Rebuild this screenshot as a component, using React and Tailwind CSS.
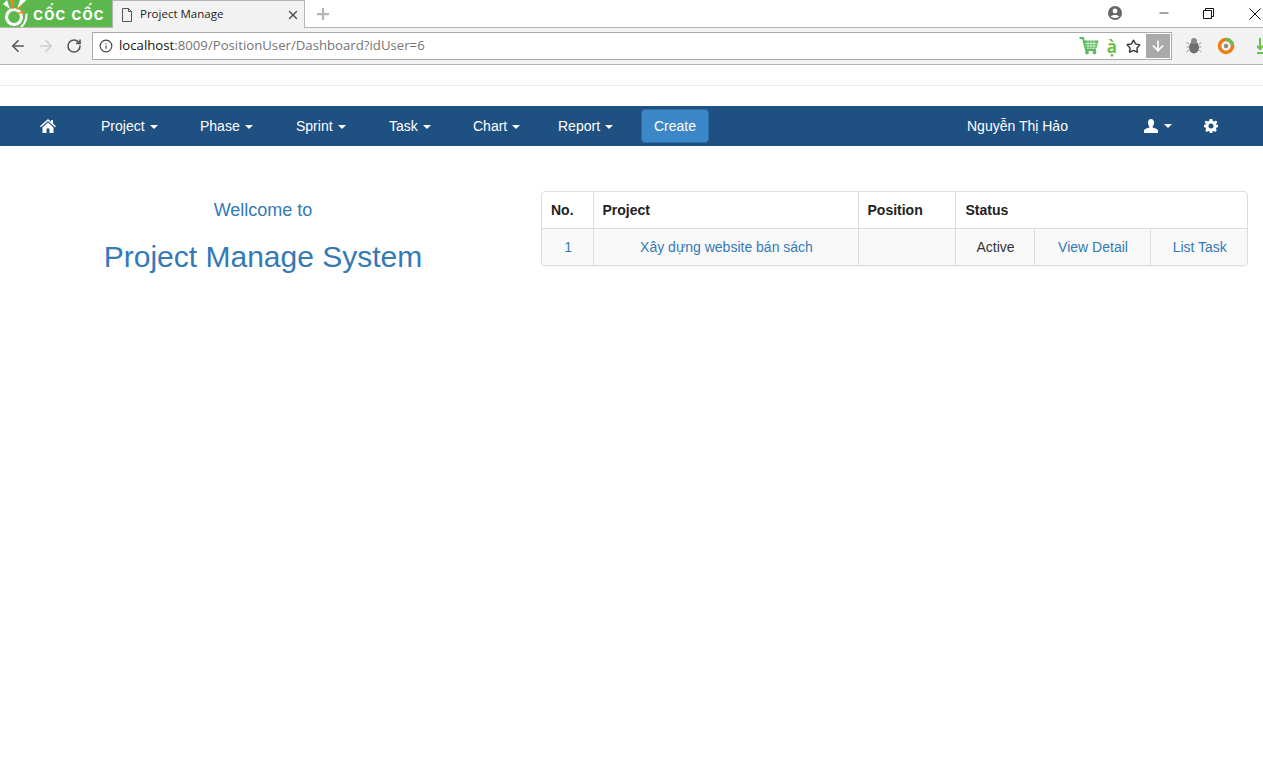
import React from "react";
import { ArrowLeft, ArrowRight, RotateCw, Info, Star, ArrowDown, X, Minus, Plus } from "lucide-react";

const navItems = [
  { label: "Project", className: "ml-[45px] w-[99px]" },
  { label: "Phase", className: "w-[96px]" },
  { label: "Sprint", className: "w-[93px]" },
  { label: "Task", className: "w-[84px]" },
  { label: "Chart", className: "w-[85px]" },
  { label: "Report", className: "w-[83px]" },
];

const Caret = () => (
  <span className="ml-[5px] inline-block h-0 w-0 border-x-4 border-t-4 border-x-transparent border-t-white align-middle" />
);

const HomeIcon = () => (
  <svg width="16" height="14" viewBox="0 0 16 14" className="text-white">
    <path
      fill="currentColor"
      d="M8 0 L11 2.7 V1 H13 V4.5 L16 7.2 L15 8.2 L8 2.1 L1 8.2 L0 7.2 Z M2.5 8.4 L8 3.6 L13.5 8.4 V14 H9.5 V9.6 H6.5 V14 H2.5 Z"
    />
  </svg>
);

const UserIcon = () => (
  <svg width="14" height="14" viewBox="0 0 14 14">
    <path
      fill="white"
      d="M7 0 C9 0 10 1.4 10 3.4 C10 5.2 9.3 6.6 8.6 7.4 V8.6 C10.5 9.2 14 10 14 12 V14 H0 V12 C0 10 3.5 9.2 5.4 8.6 V7.4 C4.7 6.6 4 5.2 4 3.4 C4 1.4 5 0 7 0 Z"
    />
  </svg>
);

const CogIcon = () => (
  <svg width="14" height="14" viewBox="0 0 14 14">
    <path
      fill="white"
      fillRule="evenodd"
      d="M5.6 0 H8.4 L8.8 1.9 L10.3 2.5 L12 1.5 L13.4 3.4 L12 4.8 L12.4 5.7 L14 5.8 V8.2 L12.4 8.6 L11.9 9.9 L12.8 11.5 L11 13 L9.6 11.9 L8.6 12.3 L8.3 14 H5.7 L5.4 12.3 L4.4 11.9 L3 13 L1.2 11.5 L2.1 9.9 L1.6 8.6 L0 8.2 V5.8 L1.6 5.7 L2 4.8 L0.6 3.4 L2 1.5 L3.7 2.5 L5.2 1.9 Z M7 4.5 A2.5 2.5 0 1 0 7 9.5 A2.5 2.5 0 1 0 7 4.5 Z"
    />
  </svg>
);

const CocCocLogo = () => (
  <svg width="30" height="27" viewBox="0 0 30 27" className="shrink-0">
    <circle cx="13" cy="17" r="7.5" fill="none" stroke="white" strokeWidth="3.2" />
    <path d="M9 0 L12.5 0 L12.8 9 L11.5 9.5 Z" fill="#f08a24" />
    <path d="M15 8.5 L20 4 L21.5 5.8 L16.2 10 Z" fill="#f08a24" />
    <path d="M17 12.5 L23.5 10.5 L24 12.6 L17.4 14 Z" fill="#f08a24" />
    <path d="M2 4 L6 0 L9 9 Z" fill="white" />
    <path d="M19 0 L25.5 0 L16.5 8 Z" fill="white" />
    <path d="M24.5 14 L26.5 13 Q27 22 21.5 27 L19 27 Q24.5 22 24.5 14 Z" fill="white" />
  </svg>
);

const BugIcon = () => (
  <svg width="16" height="18" viewBox="0 0 16 18">
    <g stroke="#9a9a9a" strokeWidth="1">
      <path d="M3 7 L0.5 5.5 M3 10 H0.5 M3 13 L0.5 15 M13 7 L15.5 5.5 M13 10 H15.5 M13 13 L15.5 15" />
    </g>
    <ellipse cx="8" cy="10.5" rx="5" ry="6" fill="#6f6f6f" />
    <circle cx="8" cy="4" r="3" fill="#8a8a8a" />
  </svg>
);

const RingIcon = () => (
  <svg width="18" height="18" viewBox="0 0 18 18" className="block">
    <circle cx="9" cy="9" r="6.5" fill="none" stroke="#ef7f1a" strokeWidth="3.6" />
    <path d="M9 2.5 A6.5 6.5 0 0 1 15.5 8" fill="none" stroke="#6bbd5b" strokeWidth="3.6" />
    <circle cx="9" cy="9" r="2.2" fill="#8a8a8a" />
  </svg>
);

const CartIcon = () => (
  <svg width="20" height="18" viewBox="0 0 20 18" fill="none" stroke="#5cb85c">
    <path d="M0.5 1 H4 L7 13 H17" strokeWidth="2" />
    <path d="M5 4 H19 L17 11 H7 Z" fill="#5cb85c" strokeWidth="1" />
    <path d="M6 6.5 H18 M6.5 9 H17.5 M9 4 V11 M12 4 V11 M15 4 V11" stroke="#f2fff0" strokeWidth="0.7" />
    <circle cx="8" cy="15.5" r="1.5" fill="#5cb85c" />
    <circle cx="15.5" cy="15.5" r="1.5" fill="#5cb85c" />
  </svg>
);

const PageIcon = () => (
  <svg width="12" height="14" viewBox="0 0 12 14" fill="none" stroke="#555" strokeWidth="1">
    <path d="M1.5 0.5 H7.5 L10.5 3.5 V13.5 H1.5 Z M7.5 0.5 V3.5 H10.5" />
  </svg>
);

const ChromeBar = () => (
  <div className="font-['Open_Sans',sans-serif]">
    {/* tab strip */}
    <div className="flex h-[28px] items-stretch border-b border-[#b4b4b4] bg-white">
      <div className="flex w-[112px] items-center bg-[#5cb84d] pl-[1px]">
        <CocCocLogo />
        <span className="ml-[2px] text-[17.5px] leading-none font-semibold tracking-[0.7px] whitespace-nowrap text-white font-['Inter',sans-serif]">
          cốc cốc
        </span>
      </div>
      <div className="-mb-px flex w-[193px] items-center border-x border-t border-[#b4b4b4] bg-[#f2f2f2] pl-[8px]">
        <PageIcon />
        <span className="mb-[2px] ml-[7px] text-[11.5px] whitespace-nowrap text-[#222]">Project Manage</span>
        <X size={14} strokeWidth={2.5} className="ml-auto mr-[4px] text-[#555]" />
      </div>
      <Plus size={18} strokeWidth={3} className="ml-[9px] self-center text-[#b5b5b5]" />
      <div className="ml-auto flex items-center">
        <svg width="14" height="14" viewBox="0 0 14 14" className="mr-[35px] mb-[2px]">
          <circle cx="7" cy="7" r="7" fill="#666" />
          <circle cx="7" cy="5" r="2.4" fill="white" />
          <path d="M2.6 10.6 C4 8.4 10 8.4 11.4 10.6 C10 12.4 4 12.4 2.6 10.6 Z" fill="white" />
        </svg>
        <Minus size={14} strokeWidth={1.2} className="mr-[32px] mb-[2px] text-black" />
        <svg width="11" height="11" viewBox="0 0 11 11" fill="none" stroke="#111" className="mr-[35px]">
          <path d="M0.5 2.5 H8.5 V10.5 H0.5 Z M2.5 2.5 V0.5 H10.5 V8.5 H8.5" />
        </svg>
        <svg width="12" height="12" viewBox="0 0 12 12" stroke="#111" className="mr-[2px]">
          <path d="M0.5 0.5 L11.5 11.5 M11.5 0.5 L0.5 11.5" />
        </svg>
      </div>
    </div>
    {/* toolbar */}
    <div className="flex h-[37px] items-center overflow-hidden border-b border-[#b4b4b4] bg-[#f2f2f2]">
      <ArrowLeft size={18} strokeWidth={2.2} className="ml-[9px] shrink-0 text-[#555]" />
      <ArrowRight size={18} strokeWidth={2.2} className="ml-[10px] shrink-0 text-[#cdcdcd]" />
      <RotateCw size={16} strokeWidth={2.4} className="ml-[11px] shrink-0 text-[#555]" />
      <div className="ml-[10px] flex h-[28px] w-[1080px] shrink-0 items-center border border-[#a9a9a9] bg-white pr-[1px] pl-[6px]">
        <Info size={14} strokeWidth={2} className="text-[#444]" />
        <span className="ml-[6px] text-[13.2px] whitespace-nowrap text-[#757575]">
          <span className="text-[#111]">localhost</span>:8009/PositionUser/Dashboard?idUser=6
        </span>
        <div className="ml-auto flex items-center">
          <CartIcon />
          <span className="mr-[9px] ml-[8px] text-[17px] leading-none font-bold text-[#6cc24a]">{"a\u0300\u0323"}</span>
          <Star size={15} strokeWidth={2.2} className="mr-[5px] text-[#333]" />
          <div className="flex h-[24px] w-[24px] items-center justify-center bg-[#a9a9a9]">
            <ArrowDown size={16} strokeWidth={2.5} className="text-white" />
          </div>
        </div>
      </div>
      <div className="ml-[14px] flex shrink-0 items-center">
        <BugIcon />
        <span className="ml-[15px]">
          <RingIcon />
        </span>
        <svg width="12" height="16" viewBox="0 0 12 16" fill="none" stroke="#6cc24a" strokeWidth="2" className="ml-[22px] shrink-0">
          <path d="M3 0 V10 M-2 6 L3 11 L8 6 M0 15 H12" />
        </svg>
      </div>
    </div>
  </div>
);

const Navbar = () => (
  <nav className="flex h-[40px] items-center bg-[#1f5082] text-[14px] text-white">
    <a className="ml-[40px] block">
      <HomeIcon />
    </a>
    {navItems.map((item) => (
      <a key={item.label} className={`${item.className} block whitespace-nowrap`}>
        {item.label}
        <Caret />
      </a>
    ))}
    <button className="h-[34px] w-[68px] rounded-[4px] border border-[#2e6da4] bg-[#3b87c8] text-white">
      Create
    </button>
    <span className="ml-[258px] whitespace-nowrap">Nguyễn Thị Hảo</span>
    <span className="ml-[76px] flex items-center">
      <UserIcon />
      <span className="flex pl-px">
        <Caret />
      </span>
    </span>
    <span className="ml-[32px]">
      <CogIcon />
    </span>
  </nav>
);

const ProjectTable = () => (
  <div className="overflow-hidden rounded-[4px] border border-[#ddd] shadow-[0_1px_1px_rgba(0,0,0,0.05)]">
    <table className="w-full table-fixed border-collapse text-[14px] text-[#333]">
      <colgroup>
        <col className="w-[51px]" />
        <col className="w-[265px]" />
        <col className="w-[97px]" />
        <col className="w-[79px]" />
        <col className="w-[116px]" />
        <col />
      </colgroup>
      <thead>
        <tr className="h-[36px] border-b border-[#ddd] text-left font-bold">
          <th className="pt-[2px] pl-[9px] text-[#222]">No.</th>
          <th className="border-l border-[#ddd] pt-[2px] pl-[9px] text-[#222]">Project</th>
          <th className="border-l border-[#ddd] pt-[2px] pl-[9px] text-[#222]">Position</th>
          <th colSpan={3} className="border-l border-[#ddd] pt-[2px] pl-[10px] text-[#222]">
            Status
          </th>
        </tr>
      </thead>
      <tbody>
        <tr className="h-[37px] bg-[#f9f9f9] text-center text-[#337ab7]">
          <td className="pt-[2px] pl-[2px]">1</td>
          <td className="border-l border-[#ddd] pt-[2px] pl-[2px]">Xây dựng website bán sách</td>
          <td className="border-l border-[#ddd]"></td>
          <td className="border-l border-[#ddd] pt-[2px] pl-[2px] text-[#333]">Active</td>
          <td className="border-l border-[#ddd] pt-[2px] pl-[2px]">View Detail</td>
          <td className="border-l border-[#ddd] pt-[2px] pl-[2px]">List Task</td>
        </tr>
      </tbody>
    </table>
  </div>
);

export default function App() {
  return (
    <div className="min-h-[766px] bg-white font-['Liberation_Sans',Arial,sans-serif]">
      <ChromeBar />
      <div className="h-[21px] border-b border-[#eee]" />
      <div className="h-[20px]" />
      <Navbar />
      <main className="flex pt-[45px]">
        <div className="w-[526px] pt-[9px] text-center text-[#337ab7]">
          <h4 className="text-[18px] leading-[20px]">Wellcome to</h4>
          <h3 className="mt-[20px] text-[30px] leading-[33px]">Project Manage System</h3>
        </div>
        <div className="flex-1 pr-[15px] pl-[15px]">
          <ProjectTable />
        </div>
      </main>
    </div>
  );
}
